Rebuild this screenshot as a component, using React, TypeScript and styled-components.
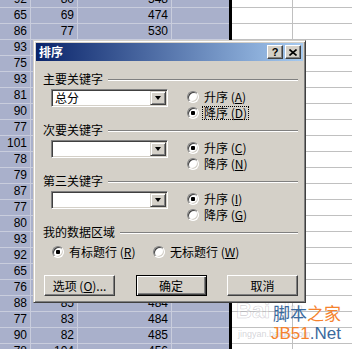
import React from 'react';
import styled, { createGlobalStyle } from 'styled-components';

const GlobalStyle = createGlobalStyle`
  html, body {
    margin: 0;
    padding: 0;
  }
  body {
    width: 352px;
    height: 349px;
    overflow: hidden;
    background: #fff;
    font-family: 'Liberation Sans', Arial, sans-serif;
  }
`;

const Screen = styled.div`
  position: relative;
  width: 352px;
  height: 349px;
  overflow: hidden;
`;

// ---- spreadsheet behind the dialog ----

const Sheet = styled.div`
  margin-top: -8px;
`;

const Row = styled.div`
  display: flex;
  height: 16px;
`;

const Cell = styled.div<{ $w?: number; $sel?: boolean; $last?: boolean }>`
  flex: ${p => (p.$w ? 'none' : '1')};
  width: ${p => (p.$w ? `${p.$w}px` : 'auto')};
  height: 16px;
  box-sizing: border-box;
  padding-right: 3px;
  background: ${p => (p.$sel ? '#a9b0cb' : '#fff')};
  border-bottom: 1px solid ${p => (p.$sel ? '#c9cddd' : '#c0c0c0')};
  border-right: ${p => (p.$last ? 'none' : `1px solid ${p.$sel ? '#c9cddd' : '#c0c0c0'}`)};
  text-align: right;
  font-size: 12px;
  line-height: 15px;
  color: #000;
`;

const SelEdge = styled.div`
  flex: none;
  width: 3px;
  height: 16px;
  background: #000;
`;

// rows 3-18 of columns B and C sit under the dialog
const data: [string, string, string][] = [
  ['92', '80', '548'],
  ['65', '69', '474'],
  ['86', '77', '530'],
  ['93', '', ''],
  ['75', '', ''],
  ['93', '', ''],
  ['81', '', ''],
  ['90', '', ''],
  ['77', '', ''],
  ['101', '', ''],
  ['78', '', ''],
  ['79', '', ''],
  ['87', '', ''],
  ['77', '', ''],
  ['80', '', ''],
  ['93', '', ''],
  ['92', '', ''],
  ['65', '', ''],
  ['76', '', ''],
  ['88', '85', '484'],
  ['77', '83', '484'],
  ['90', '82', '485'],
  ['78', '104', '456'],
];

// ---- dialog ----

const Dialog = styled.div`
  position: absolute;
  left: 33px;
  top: 40px;
  width: 273px;
  height: 263px;
  box-sizing: border-box;
  background: #d4d0c8;
  border: 1px solid;
  border-color: #d4d0c8 #404040 #404040 #d4d0c8;
  box-shadow: inset 1px 1px #fff, inset -1px -1px #808080;
  padding: 2px;
  display: flex;
  flex-direction: column;
  font-family: 'Noto Sans CJK SC', 'Liberation Sans', sans-serif;
  font-size: 12px;
  color: #000;
`;

const TitleBar = styled.div`
  height: 18px;
  flex: none;
  display: flex;
  align-items: center;
  padding: 0 2px 0 3px;
  background: linear-gradient(to right, #0a246a, #a6caf0);
`;

const Title = styled.span`
  color: #fff;
  font-weight: bold;
  font-size: 12px;
  line-height: 18px;
`;

const CaptionButtons = styled.div`
  margin-left: auto;
  display: flex;
  gap: 2px;
`;

const CaptionButton = styled.div`
  width: 16px;
  height: 14px;
  box-sizing: border-box;
  background: #d4d0c8;
  border: 1px solid;
  border-color: #fff #404040 #404040 #fff;
  box-shadow: inset -1px -1px #808080;
  display: flex;
  align-items: center;
  justify-content: center;
  font-family: 'Liberation Sans', Arial, sans-serif;
  font-weight: bold;
  font-size: 11px;
  line-height: 12px;
`;

const Body = styled.div`
  flex: 1;
  display: flex;
  flex-direction: column;
  padding: 11px 5px 0 7px;
`;

const Section = styled.div`
  height: 51px;
  display: flex;
  flex-direction: column;
`;

const Heading = styled.div`
  display: flex;
  align-items: center;
  height: 14px;
  line-height: 14px;
`;

const Rule = styled.div`
  flex: 1;
  height: 0;
  margin: 2px 0 0 5px;
  border-top: 1px solid #808080;
  border-bottom: 1px solid #fff;
`;

const KeyRow = styled.div`
  display: flex;
  margin-top: 3px;
  padding-left: 8px;
`;

const Combo = styled.div`
  width: 117px;
  height: 18px;
  box-sizing: border-box;
  background: #fff;
  border: 1px solid;
  border-color: #808080 #fff #fff #808080;
  box-shadow: inset 1px 1px #404040, inset -1px -1px #d4d0c8;
  padding: 1px;
  display: flex;
`;

const ComboText = styled.div`
  flex: 1;
  padding-left: 2px;
  line-height: 14px;
`;

const DropButton = styled.div`
  width: 16px;
  box-sizing: border-box;
  background: #d4d0c8;
  border: 1px solid;
  border-color: #d4d0c8 #404040 #404040 #d4d0c8;
  box-shadow: inset 1px 1px #fff, inset -1px -1px #808080;
  display: flex;
  align-items: center;
  justify-content: center;
`;

const Arrow = styled.div`
  width: 0;
  height: 0;
  border-left: 3.5px solid transparent;
  border-right: 3.5px solid transparent;
  border-top: 4px solid #000;
`;

const RadioColumn = styled.div`
  display: flex;
  flex-direction: column;
  margin-left: 19px;
`;

const RadioOption = styled.div<{ $width?: number }>`
  display: flex;
  align-items: center;
  height: 16px;
  width: ${p => (p.$width ? `${p.$width}px` : 'auto')};
  flex: none;
`;

const RadioCircle = styled.div<{ $on?: boolean }>`
  width: 12px;
  height: 12px;
  box-sizing: border-box;
  border-radius: 50%;
  border: 1px solid;
  border-color: #808080 #fff #fff #808080;
  box-shadow: inset 1px 1px #404040, inset -1px -1px #d4d0c8;
  background: #fff;
  display: flex;
  align-items: center;
  justify-content: center;
  margin-right: 4px;
  &::after {
    content: '';
    display: ${p => (p.$on ? 'block' : 'none')};
    width: 4px;
    height: 4px;
    border-radius: 1px;
    background: #000;
  }
`;

const RadioLabel = styled.span<{ $focus?: boolean }>`
  line-height: 12px;
  padding: 0 1px;
  outline: ${p => (p.$focus ? '1px dotted #000' : 'none')};
  outline-offset: 0;
  white-space: nowrap;
`;

const Key = styled.span`
  text-decoration: underline;
`;

const AreaRow = styled.div`
  display: flex;
  margin-top: 5px;
  padding-left: 9px;
`;

const ButtonRow = styled.div`
  display: flex;
  margin-top: 15px;
  padding-left: 1px;
`;

const Button = styled.div<{ $default?: boolean }>`
  width: 71px;
  height: 21px;
  box-sizing: border-box;
  background: #d4d0c8;
  border: 1px solid;
  border-color: ${p => (p.$default ? '#000' : '#fff #404040 #404040 #fff')};
  box-shadow: ${p =>
    p.$default
      ? 'inset 1px 1px #fff, inset -1px -1px #404040, inset -2px -2px #808080'
      : 'inset -1px -1px #808080'};
  display: flex;
  align-items: center;
  justify-content: center;
  line-height: 14px;
  margin-left: ${p => (p.$default ? 'auto' : '0')};
  & + & {
    margin-left: ${p => (p.$default ? 'auto' : '7px')};
  }
`;

// ---- watermark ----

const Watermark = styled.div`
  position: absolute;
  left: 271px;
  top: 304px;
  display: flex;
  flex-direction: column;
  line-height: 1;
`;

const BrandCn = styled.div`
  font-family: 'Noto Sans CJK SC', sans-serif;
  font-size: 17px;
  padding-left: 2px;
`;

const BrandEn = styled.div`
  font-family: 'Liberation Sans', Arial, sans-serif;
  font-size: 17px;
  margin-top: 4px;
`;

const Blue = styled.span`
  color: #3a6a9e;
`;

const Orange = styled.span`
  color: #f5822d;
`;

const BaiduMark = styled.div`
  position: absolute;
  left: 236px;
  top: 300px;
  font-family: 'Liberation Sans', Arial, sans-serif;
  font-weight: bold;
  font-size: 22px;
  color: rgba(255, 255, 255, 0.35);
  -webkit-text-stroke: 0.6px rgba(150, 150, 160, 0.45);
  line-height: 1;
`;

const BaiduSub = styled.div`
  position: absolute;
  left: 238px;
  top: 329px;
  font-family: 'Liberation Sans', Arial, sans-serif;
  font-size: 9px;
  color: rgba(170, 170, 180, 0.5);
`;

const Radio: React.FC<{ on?: boolean; focus?: boolean; width?: number; children: React.ReactNode }> = ({
  on,
  focus,
  width,
  children,
}) => (
  <RadioOption $width={width}>
    <RadioCircle $on={on} />
    <RadioLabel $focus={focus}>{children}</RadioLabel>
  </RadioOption>
);

const KeySection: React.FC<{
  label: string;
  value?: string;
  desc?: boolean;
  focusDesc?: boolean;
  asc: string;
  dsc: string;
}> = ({ label, value, desc, focusDesc, asc, dsc }) => (
  <Section>
    <Heading>
      {label}
      <Rule />
    </Heading>
    <KeyRow>
      <Combo>
        <ComboText>{value}</ComboText>
        <DropButton>
          <Arrow />
        </DropButton>
      </Combo>
      <RadioColumn>
        <Radio on={!desc}>
          升序 (<Key>{asc}</Key>)
        </Radio>
        <Radio on={desc} focus={focusDesc}>
          降序 (<Key>{dsc}</Key>)
        </Radio>
      </RadioColumn>
    </KeyRow>
  </Section>
);

const App: React.FC = () => {
  return (
    <Screen>
      <GlobalStyle />
      <Sheet>
        {data.map(([a, b, c], i) => (
          <Row key={i}>
            <Cell $w={31} $sel>{a}</Cell>
            <Cell $w={47} $sel>{b}</Cell>
            <Cell $w={94} $sel>{c}</Cell>
            <Cell $w={57} $sel $last />
            <SelEdge />
            <Cell $w={61} />
            <Cell $last />
          </Row>
        ))}
      </Sheet>

      <BaiduMark>Bai du</BaiduMark>
      <BaiduSub>jingyan.baidu.com</BaiduSub>
      <Watermark>
        <BrandCn>
          <Blue>脚本</Blue>
          <Orange>之家</Orange>
        </BrandCn>
        <BrandEn>
          <Orange>JB51</Orange>
          <Blue>.Net</Blue>
        </BrandEn>
      </Watermark>

      <Dialog>
        <TitleBar>
          <Title>排序</Title>
          <CaptionButtons>
            <CaptionButton>?</CaptionButton>
            <CaptionButton>
              <svg width="8" height="7" viewBox="0 0 8 7">
                <path d="M0.5 0.5 L7.5 6.5 M7.5 0.5 L0.5 6.5" stroke="#000" strokeWidth="1.6" />
              </svg>
            </CaptionButton>
          </CaptionButtons>
        </TitleBar>
        <Body>
          <KeySection label="主要关键字" value="总分" desc focusDesc asc="A" dsc="D" />
          <KeySection label="次要关键字" asc="C" dsc="N" />
          <KeySection label="第三关键字" asc="I" dsc="G" />
          <Heading>
            我的数据区域
            <Rule />
          </Heading>
          <AreaRow>
            <Radio on width={101}>
              有标题行 (<Key>R</Key>)
            </Radio>
            <Radio>
              无标题行 (<Key>W</Key>)
            </Radio>
          </AreaRow>
          <ButtonRow>
            <Button>
              选项 (<Key>O</Key>)...
            </Button>
            <Button $default>确定</Button>
            <Button>取消</Button>
          </ButtonRow>
        </Body>
      </Dialog>
    </Screen>
  );
};

export default App;
